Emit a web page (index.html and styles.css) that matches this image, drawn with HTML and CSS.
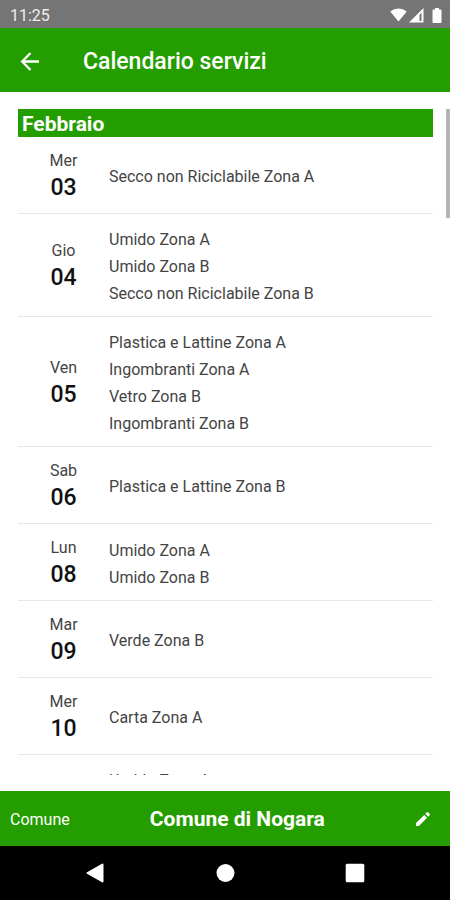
FILE: index.html
```html
<!DOCTYPE html>
<html lang="it">
<head>
<meta charset="utf-8">
<meta name="viewport" content="width=device-width, initial-scale=1">
<title>Calendario servizi</title>
<link rel="stylesheet" href="styles.css">
</head>
<body>
<div class="status">
  <span>11:25</span>
  <div class="status-icons">
    <svg width="17" height="14" viewBox="0 0 17 14" aria-hidden="true"><path d="M8.500 13.500.3 3.600Q4 .5 8.500 .5t8.200 3.100z" fill="#fff"/></svg>
    <svg width="15" height="15" viewBox="0 0 15 15" aria-hidden="true"><path d="M0 14.500 14.500 0v14.500z" fill="#fff"/><path d="M10.500 13V7l2-2.500V13z" fill="#757575"/></svg>
    <svg class="battery" width="10" height="15" viewBox="0 0 10 15" aria-hidden="true"><path d="M3 0h4v1.500h1.500q1 0 1 1V14q0 1-1 1h-7q-1 0-1-1V2.500q0-1 1-1H3z" fill="#fff"/></svg>
  </div>
</div>
<header class="appbar">
  <button class="icon-button" aria-label="Indietro">
    <svg width="20" height="20" viewBox="0 0 20 20" aria-hidden="true"><path d="M19 9.500H2.500M10.500 1 2.200 9.500l8.300 8.500" fill="none" stroke="#fff" stroke-width="2.300"/></svg>
  </button>
  <h1>Calendario servizi</h1>
</header>
<main>
  <div class="list">
    <h2>Febbraio</h2>
    <section class="day"><div class="date"><span>Mer</span><b>03</b></div><ul><li>Secco non Riciclabile Zona A</li></ul></section>
    <section class="day"><div class="date"><span>Gio</span><b>04</b></div><ul><li>Umido Zona A</li><li>Umido Zona B</li><li>Secco non Riciclabile Zona B</li></ul></section>
    <section class="day"><div class="date"><span>Ven</span><b>05</b></div><ul><li>Plastica e Lattine Zona A</li><li>Ingombranti Zona A</li><li>Vetro Zona B</li><li>Ingombranti Zona B</li></ul></section>
    <section class="day"><div class="date"><span>Sab</span><b>06</b></div><ul><li>Plastica e Lattine Zona B</li></ul></section>
    <section class="day"><div class="date"><span>Lun</span><b>08</b></div><ul><li>Umido Zona A</li><li>Umido Zona B</li></ul></section>
    <section class="day"><div class="date"><span>Mar</span><b>09</b></div><ul><li>Verde Zona B</li></ul></section>
    <section class="day"><div class="date"><span>Mer</span><b>10</b></div><ul><li>Carta Zona A</li></ul></section>
    <section class="day"><ul><li>Umido Zona A</li></ul></section>
  </div>
  <div class="scroll-thumb"></div>
</main>
<footer class="town">
  <span>Comune</span>
  <strong>Comune di Nogara</strong>
  <button class="icon-button edit" aria-label="Modifica comune">
    <svg width="14" height="14" viewBox="0 0 14 14" aria-hidden="true"><path d="M0 11.100V14h2.900l8.200-8.200-2.900-2.900zM13.700 3.200q.5-.5 0-1.100L11.900.3q-.6-.5-1.100 0L9.300 1.800l2.900 2.900z" fill="#fff"/></svg>
  </button>
</footer>
<nav class="system">
  <button class="icon-button" aria-label="Indietro"><svg width="20" height="22" viewBox="0 0 20 22" aria-hidden="true"><path d="M2.500 11 17.500 2.500v17z" fill="#fff" stroke="#fff" stroke-width="2" stroke-linejoin="round"/></svg></button>
  <button class="icon-button" aria-label="Home"><svg width="20" height="20" viewBox="0 0 20 20" aria-hidden="true"><circle cx="10.500" cy="10" r="9" fill="#fff"/></svg></button>
  <button class="icon-button" aria-label="Recenti"><svg width="20" height="20" viewBox="0 0 20 20" aria-hidden="true"><rect x=".7" y=".7" width="18.600" height="18.600" rx="1.500" fill="#fff"/></svg></button>
</nav>
</body>
</html>
```

FILE: styles.css
```css
* {
  box-sizing: border-box;
}

body {
  margin: 0;
  height: 100vh;
  display: flex;
  flex-direction: column;
  background: #fff;
  color: #444;
  font-family: Roboto, sans-serif;
  font-size: 16px;
}

h1, h2, ul {
  margin: 0;
  padding: 0;
}

svg {
  display: block;
}

.icon-button {
  display: flex;
  padding: 0;
  border: 0;
  background: none;
}

.status {
  flex: none;
  height: 28px;
  padding: 2px 8px 0 10px;
  display: flex;
  align-items: center;
  justify-content: space-between;
  background: #757575;
  color: #eee;
}

.status-icons {
  display: flex;
  align-items: center;
  gap: 2px;
}

.battery {
  margin-left: 6px;
}

.appbar {
  flex: none;
  height: 64px;
  padding: 3px 20px 0;
  display: flex;
  align-items: center;
  gap: 43px;
  background: #249d00;
  color: #fff;
}

.appbar h1 {
  font-size: 23px;
  font-weight: 500;
}

main {
  position: relative;
  flex: 1;
  min-height: 0;
  display: flex;
  padding: 17px 17px 16px 18px;
}

.list {
  flex: 1;
  overflow-y: auto;
  scrollbar-width: none;
}

.list h2 {
  padding: 2px 4px 0;
  background: #249d00;
  color: #fff;
  font-size: 21px;
  line-height: 26px;
  font-weight: 700;
}

.scroll-thumb {
  position: absolute;
  top: 17px;
  right: 0;
  width: 4px;
  height: 109px;
  background: #b5b5b5;
}

.day {
  display: grid;
  grid-template-columns: 91px 1fr;
  align-items: center;
  padding: 12px 0 9px;
  border-bottom: 1px solid #e8e8e8;
}

.day ul {
  grid-column: 2;
  list-style: none;
  line-height: 27px;
}

.date {
  display: flex;
  flex-direction: column;
  align-items: center;
  line-height: 23px;
}

.date b {
  color: #111;
  font-size: 23px;
  line-height: 32px;
  font-weight: 500;
}

.town {
  flex: none;
  height: 55px;
  padding: 1px 9px 0 10px;
  display: flex;
  align-items: center;
  justify-content: space-between;
  background: #249d00;
  color: #fff;
}

.town strong {
  font-size: 21px;
  font-weight: 700;
}

.edit {
  padding: 11px;
}

.system {
  flex: none;
  height: 54px;
  padding: 0 30px;
  display: grid;
  grid-template-columns: repeat(3, 1fr);
  place-items: center;
  background: #000;
}
```
